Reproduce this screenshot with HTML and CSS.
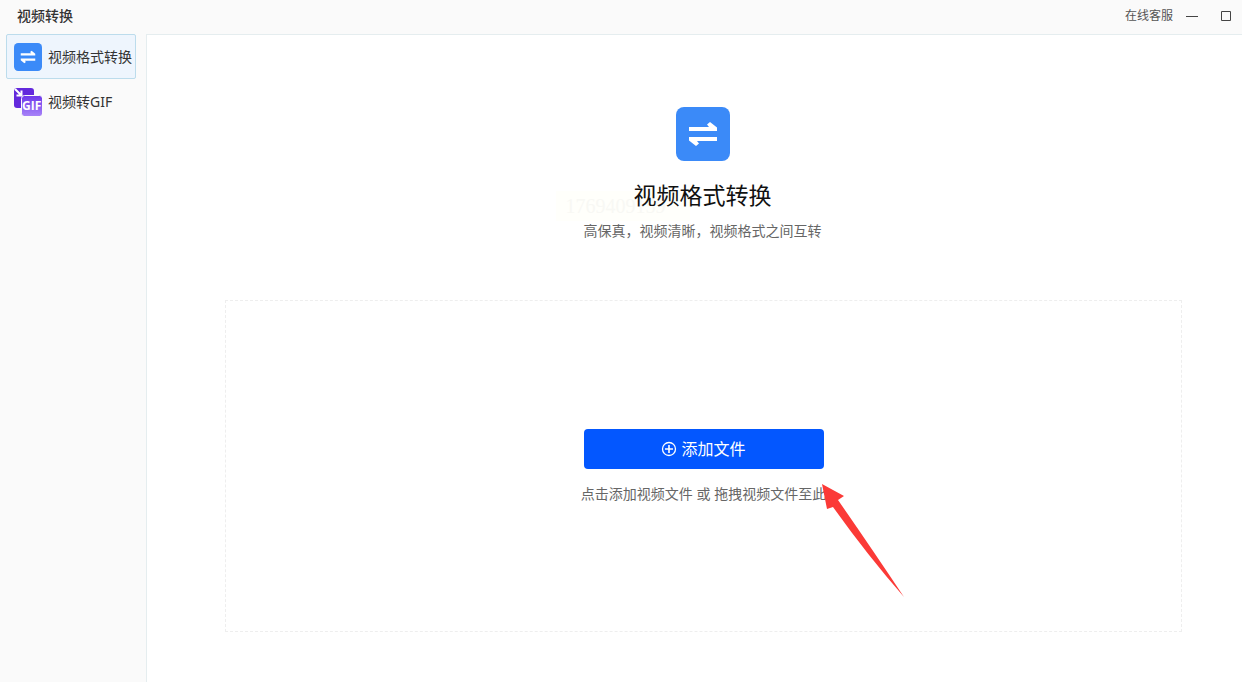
FILE: index.html
```html
<!DOCTYPE html>
<html lang="zh-CN">
<head>
<meta charset="utf-8">
<title>视频转换</title>
<link rel="stylesheet" href="styles.css">
</head>
<body>
<svg class="defs" aria-hidden="true">
  <symbol id="swap" viewBox="0 0 54 54">
    <rect width="54" height="54" rx="8" fill="#3b8af8"/>
    <path fill="#fff" d="M13 20h20l-2-2.500 3-2.500 7 5.500V24H13zM41 34H21l2 2.500-3 2.500-7-5.500V30h28z"/>
  </symbol>
</svg>
<div class="app">
  <header class="topbar">
    <h1 class="app-title">视频转换</h1>
    <div class="window-tools">
      <a class="service" href="#">在线客服</a>
      <button class="window-button" aria-label="最小化"><svg width="12" height="12"><path d="M0 6.500h12" stroke="#444"/></svg></button>
      <button class="window-button" aria-label="最大化"><svg width="12" height="12"><path d="M1.500 1.500h9v9h-9z" fill="none" stroke="#444"/></svg></button>
    </div>
  </header>
  <nav class="sidebar">
    <a class="nav-item active" href="#"><svg class="nav-icon" aria-hidden="true"><use href="#swap"/></svg>视频格式转换</a>
    <a class="nav-item" href="#"><svg class="nav-icon" viewBox="0 0 28 28" aria-hidden="true">
      <defs><linearGradient id="violet" x1="0" y1="0" x2="0" y2="1"><stop offset="0" stop-color="#6d37ea"/><stop offset="1" stop-color="#a884f8"/></linearGradient></defs>
      <rect width="20" height="20" rx="3" fill="#6329dc"/>
      <path d="M1 1l6 6M7.500 2.500v5h-5" fill="none" stroke="#fff" stroke-width="2"/>
      <rect x="7.500" y="7.500" width="21" height="21" rx="3" fill="url(#violet)" stroke="#fafafa"/>
      <text class="gif-mark" x="8" y="22">GIF</text>
    </svg>视频转GIF</a>
  </nav>
  <main class="content">
    <section class="hero">
      <svg class="hero-icon" aria-hidden="true"><use href="#swap"/></svg>
      <div class="heading"><span class="watermark">1769409159</span><h2 class="hero-title">视频格式转换</h2></div>
      <p class="muted">高保真，视频清晰，视频格式之间互转</p>
    </section>
    <section class="drop-zone">
      <div class="picker">
        <button class="add-button"><svg width="16" height="16" viewBox="0 0 16 16" fill="none" stroke="#fff" stroke-width="1.300" aria-hidden="true"><circle cx="8" cy="8" r="6.500"/><path d="M4 8h8M8 4v8" stroke-width="1.600"/></svg>添加文件</button>
        <p class="muted hint">点击添加视频文件 或 拖拽视频文件至此</p>
        <svg class="pointer" viewBox="0 0 84 116" aria-hidden="true"><path fill="#fb3a37" d="M0 0l22 12-6 4Q48 62 82 113Q46 72 11 23l-6 2z"/></svg>
      </div>
    </section>
  </main>
</div>
</body>
</html>
```
FILE: styles.css
```css
* { box-sizing: border-box; }
body { margin: 0; font-family: "Noto Sans", "Noto Sans CJK SC", sans-serif; font-size: 14px; line-height: 20px; color: #333; }
h1, h2, p { margin: 0; font-weight: 400; }
a { color: inherit; text-decoration: none; }
button { border: 0; padding: 0; font: inherit; color: inherit; background: none; }
svg { display: block; }
.defs { position: absolute; width: 0; height: 0; }
.app { display: grid; grid-template: 34px 1fr / 146px 1fr; min-height: 100vh; background: #fafafa; }
.topbar { grid-column: 1 / -1; display: flex; align-items: center; justify-content: space-between; padding: 0 10px 2px 17px; }
.app-title { font-size: 14px; font-weight: 500; }
.window-tools { display: flex; align-items: center; gap: 22px; }
.service { margin-right: -9px; font-size: 12px; color: #555; }
.sidebar { padding: 0 10px 0 6px; }
.nav-item { display: flex; align-items: center; gap: 6px; height: 45px; padding-left: 7px; border: 1px solid transparent; white-space: nowrap; }
.nav-item.active { background: #eef5fd; border-color: #bcdcec; border-radius: 2px; }
.nav-icon { width: 28px; height: 28px; flex: none; }
.gif-mark { font: bold 12px "Open Sans", sans-serif; fill: #fff; }
.content { display: flex; flex-direction: column; padding: 72px 60px 50px 78px; background: #fff; border: solid #e5edef; border-width: 1px 0 0 1px; }
.hero { display: flex; flex-direction: column; align-items: center; padding-right: 2px; }
.hero-icon { width: 54px; height: 54px; }
.heading { position: relative; margin-top: 17px; }
.hero-title { position: relative; font-size: 23px; line-height: 34px; color: #111; }
.watermark { position: absolute; right: 82px; top: 13px; padding: 0 24px 0 10px; font: 20px/30px "Liberation Serif", serif; color: #f8f8f4; background: #fffffb; }
.muted { color: #666; }
.hero .muted { margin-top: 9px; }
.drop-zone { flex: 1; display: flex; align-items: center; justify-content: center; margin-top: 59px; border: 1px dashed #eee; }
.picker { position: relative; display: flex; flex-direction: column; align-items: center; gap: 15px; }
.add-button { display: flex; align-items: center; justify-content: center; gap: 4px; width: 240px; height: 40px; border-radius: 4px; background: #0357ff; color: #fff; font-size: 16px; }
.pointer { position: absolute; left: 100%; top: 55px; width: 84px; height: 116px; margin-left: -4px; }
```
